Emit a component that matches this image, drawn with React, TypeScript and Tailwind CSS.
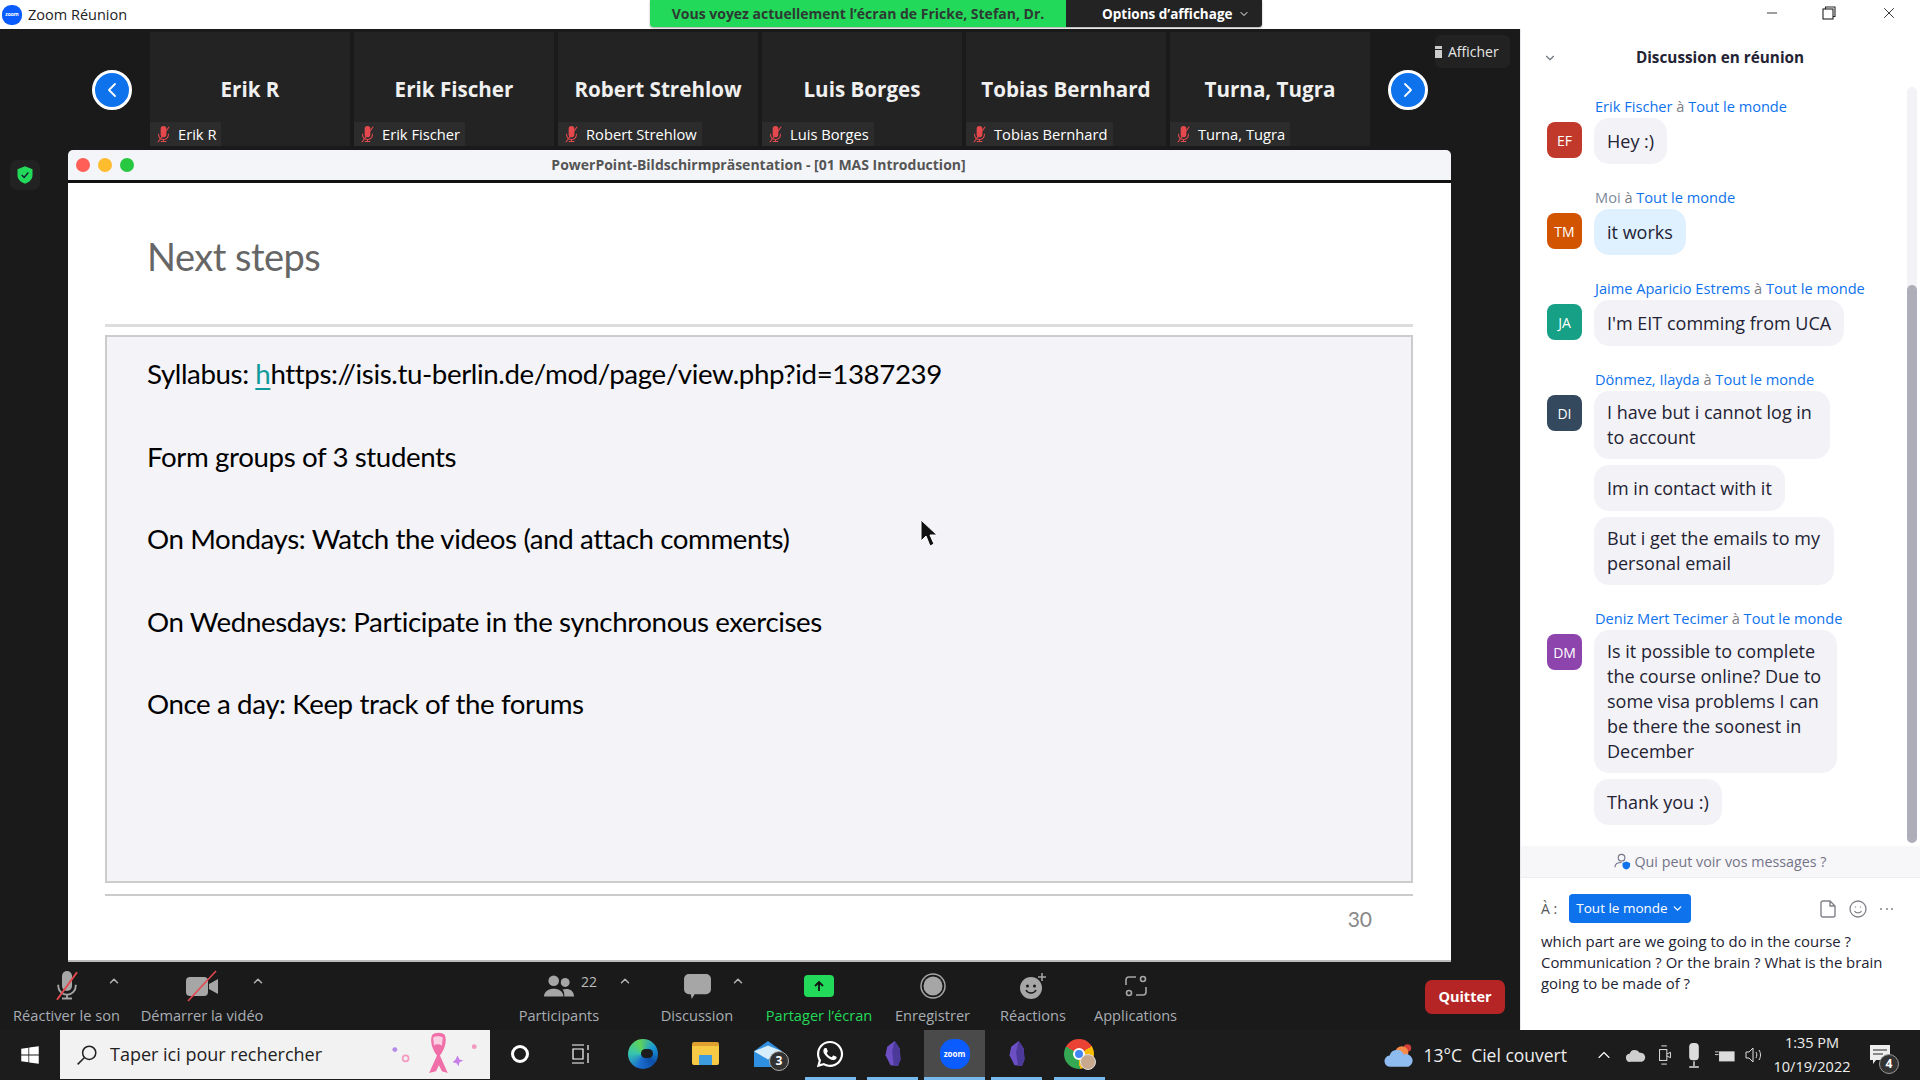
import React from "react";
import { ChevronDown, ChevronLeft, ChevronRight, ChevronUp, Minus, X } from "lucide-react";
import { FaWhatsapp, FaWindows } from "react-icons/fa";

const tiles = ["Erik R", "Erik Fischer", "Robert Strehlow", "Luis Borges", "Tobias Bernhard", "Turna, Tugra"];

const slideLines = [
  "Form groups of 3 students",
  "On Mondays: Watch the videos (and attach comments)",
  "On Wednesdays: Participate in the synchronous exercises",
  "Once a day: Keep track of the forums",
];

// wrapped bubbles hug their text in the picture, so they carry a width
const chat = [
  { from: "Erik Fischer", initials: "EF", color: "bg-[#c0392b]", bubbles: [{ text: "Hey :)" }] },
  { from: "Moi", initials: "TM", color: "bg-[#d35400]", bubbles: [{ text: "it works" }], mine: true },
  { from: "Jaime Aparicio Estrems", initials: "JA", color: "bg-[#16a085]", bubbles: [{ text: "I'm EIT comming from UCA" }] },
  {
    from: "Dönmez, Ilayda",
    initials: "DI",
    color: "bg-[#34495e]",
    bubbles: [
      { text: "I have but i cannot log in to\u00a0account", width: "w-[236px]" },
      { text: "Im in contact with it" },
      { text: "But i get the emails to my personal email", width: "w-[240px]" },
    ],
  },
  {
    from: "Deniz Mert Tecimer",
    initials: "DM",
    color: "bg-[#8e44ad]",
    bubbles: [
      { text: "Is it possible to complete the course online? Due to some visa problems I can be there the soonest in December", width: "w-[243px]" },
      { text: "Thank you :)" },
    ],
  },
];

function MutedMic({ className, tone = "#a6a6a6" }: { className: string; tone?: string }) {
  return (
    <svg viewBox="0 0 24 24" className={className} fill="none">
      <path d="M8 13V5a4 4 0 0 1 8 0v8a4 4 0 0 1-8 0z" fill={tone} transform="translate(0 -1)" />
      <path d="M5 11v1a7 7 0 0 0 14 0v-1M12 19v3M8 22h8" stroke={tone} strokeWidth="1.5" />
      <path d="M20 1 4 23" stroke="#e5484d" strokeWidth="1.6" />
    </svg>
  );
}

function ToolButton({ label, width, caret, green, children }: { label: string; width: string; caret?: string; green?: boolean; children: React.ReactNode }) {
  return (
    <div className={`relative flex flex-col items-center shrink-0 ${width}`}>
      <div className="relative h-[36px] flex items-center justify-center">{children}</div>
      <div className={`mt-[1px] text-[14.6px] leading-[20px] whitespace-nowrap ${green ? "text-[#23d959]" : "text-[#a8adb3]"}`}>{label}</div>
      {caret && <ChevronUp className={`absolute top-[6px] w-[14px] h-[14px] text-[#b5b5b5] ${caret}`} strokeWidth={2.5} />}
    </div>
  );
}

function ChatMessage({ from, initials, color, bubbles, mine }: { from: string; initials: string; color: string; bubbles: { text: string; width?: string }[]; mine?: boolean }) {
  return (
    <div className="flex gap-[12px] mb-[23px]">
      <div className={`w-[35px] h-[36px] mt-[26px] shrink-0 rounded-[8px] flex items-center justify-center text-white text-[14px] ${color}`}>{initials}</div>
      <div className="min-w-0">
        <div className="text-[14.6px] leading-[20px] mb-[2px] ml-[1px] whitespace-nowrap">
          <span className={mine ? "text-[#7d8a9a]" : "text-[#0e72ed]"}>{from}</span>
          <span className="text-[#7d7d85]"> à </span>
          <span className="text-[#0e72ed]">Tout le monde</span>
        </div>
        <div className="flex flex-col items-start gap-[6px]">
          {bubbles.map((b) => (
            <div key={b.text} className={`${b.width ?? "max-w-[254px]"} min-h-[46px] px-[13px] py-[9px] rounded-[15px] text-[18px] leading-[25px] flex items-center text-[#232333] ${mine ? "bg-[#dff0ff]" : "bg-[#f2f2f7]"}`}>
              <span>{b.text}</span>
            </div>
          ))}
        </div>
      </div>
    </div>
  );
}

function ZoomLogo({ className, text }: { className: string; text: string }) {
  return <div className={`bg-[#0b5cff] flex items-center justify-center text-white font-bold rounded-[45%] ${className} ${text}`}>zoom</div>;
}

function Obsidian() {
  return (
    <svg viewBox="0 0 24 32" className="w-[20px] h-[27px]">
      <path d="M14 1 5 8 3 18l6 12 9 1 3-8-1-13z" fill="#6c4fc4" />
      <path d="M14 1 11 14l2 16 5 1 3-8-1-13z" fill="#4c3a9a" />
    </svg>
  );
}

function TaskItem({ width, line, active, children }: { width: string; line?: boolean; active?: boolean; children: React.ReactNode }) {
  return (
    <div className={`relative flex flex-col items-center shrink-0 ${width} ${active ? "bg-[#4a4a4a]" : ""}`}>
      <div className="flex-1 flex items-center justify-center">{children}</div>
      <div className={`h-[3px] ${active ? "w-full" : "w-[51px]"} ${line ? "bg-[#76b9ed]" : "bg-transparent"}`} />
    </div>
  );
}

export default function App() {
  return (
    <div className="w-[1920px] h-[1080px] overflow-hidden flex flex-col bg-[#1a1a1a] font-['Open_Sans',sans-serif]">
      {/* title bar */}
      <div className="h-[29px] bg-white flex items-start shrink-0">
        <div className="w-[650px] h-[29px] flex items-center pl-[2px] gap-[6px]">
          <ZoomLogo className="w-[20px] h-[20px]" text="text-[5px]" />
          <span className="text-[14.5px] text-[#222]">Zoom Réunion</span>
        </div>
        <div className="flex h-[27px] rounded-b-[3px] overflow-hidden shadow-[0_1px_2px_rgba(0,0,0,0.35)]">
          <div className="w-[416px] bg-[#23d959] text-[#2c3a33] text-[14px] font-bold flex items-center justify-center whitespace-nowrap">
            Vous voyez actuellement l’écran de Fricke, Stefan, Dr.
          </div>
          <div className="w-[196px] bg-[#232323] text-white text-[13.5px] font-bold flex items-center pl-[36px] pt-[1px] gap-[6px] whitespace-nowrap">
            Options d’affichage
            <ChevronDown className="w-[12px] h-[12px]" />
          </div>
        </div>
        <div className="flex-1" />
        <div className="w-[156px] h-[26px] flex items-center text-[#222]">
          <Minus className="w-[16px] h-[16px]" strokeWidth={1.3} />
          <svg viewBox="0 0 14 14" className="ml-[42px] w-[14px] h-[14px]" fill="none" stroke="#222" strokeWidth="1.1">
            <rect x="1" y="3" width="10" height="10" />
            <path d="M3.5 3V1h9.5v9.5H11" />
          </svg>
          <X className="ml-[44px] w-[18px] h-[18px]" strokeWidth={1.2} />
        </div>
      </div>

      {/* middle */}
      <div className="flex-1 flex min-h-0">
        <div className="w-[1520px] flex flex-col shrink-0">
          {/* thumbnails strip */}
          <div className="flex h-[117px] pt-[3px] shrink-0">
            <div className="ml-[92px] mt-[38px] w-[40px] h-[40px] rounded-full bg-[#0e72ed] border-[3px] border-white flex items-center justify-center shrink-0">
              <ChevronLeft className="w-[24px] h-[24px] text-white" strokeWidth={1.8} />
            </div>
            <div className="ml-[18px] flex gap-[4px]">
              {tiles.map((name) => (
                <div key={name} className="w-[200px] h-[114px] bg-[#232323] flex flex-col">
                  <div className="flex-1 flex items-center justify-center text-[20.6px] font-bold text-[#f0f0f0] pt-[25px]">{name}</div>
                  <div className="self-start h-[24px] bg-[#2c2c2c] flex items-center pl-[5px] pr-[5px] gap-[6px] text-[14.7px] text-white">
                    <MutedMic className="w-[17px] h-[19px]" tone="#e5484d" />
                    {name}
                  </div>
                </div>
              ))}
            </div>
            <div className="ml-[18px] mt-[38px] w-[40px] h-[40px] rounded-full bg-[#0e72ed] border-[3px] border-white flex items-center justify-center shrink-0">
              <ChevronRight className="w-[24px] h-[24px] text-white" strokeWidth={1.8} />
            </div>
            <div className="ml-[7px] mt-[3px] w-[75px] h-[33px] bg-[#222] rounded-[6px] flex items-center gap-[6px] text-[14px] text-[#e6e6e6]">
              <div className="flex flex-col gap-[1px]">
                <div className="w-[7px] h-[3px] bg-[#ccc]" />
                <div className="w-[7px] h-[8px] bg-[#ccc]" />
              </div>
              Afficher
            </div>
          </div>

          {/* shared screen */}
          <div className="flex pt-[4px] pl-[10px] shrink-0">
            <div className="mt-[10px] w-[30px] h-[30px] rounded-[7px] bg-[#222] flex items-center justify-center">
              <svg viewBox="0 0 24 24" className="w-[20px] h-[20px]">
                <path d="M12 1.5 21 5v7c0 5-3.6 8.6-9 10.5C6.600 20.600 3 17 3 12V5z" fill="#23d959" />
                <path d="m8 12 3 3 5-6" stroke="#123" strokeWidth="1.8" fill="none" />
              </svg>
            </div>
            <div className="ml-[28px] w-[1383px] h-[812px] flex flex-col font-['Lato',sans-serif]">
              <div className="h-[30px] bg-[#f4f5f9] rounded-t-[5px] flex items-center pl-[8px] relative shrink-0">
                <div className="flex gap-[8px]">
                  <div className="w-[14px] h-[14px] rounded-full bg-[#ff5f57]" />
                  <div className="w-[14px] h-[14px] rounded-full bg-[#febc2e]" />
                  <div className="w-[14px] h-[14px] rounded-full bg-[#28c840]" />
                </div>
                <div className="flex-1 pr-[68px] pb-[2px] text-center text-[14px] font-bold text-[#555] font-['Open_Sans',sans-serif] whitespace-nowrap">
                  PowerPoint-Bildschirmpräsentation - [01 MAS Introduction]
                </div>
              </div>
              <div className="h-[3px] bg-[#111] shrink-0" />
              <div className="flex-1 bg-white pl-[37px] pr-[38px] flex flex-col border-b-[2px] border-[#bbb]">
                <div className="h-[144px] pl-[42px] pt-[51px] text-[38px] leading-[44px] text-[#666] tracking-[-0.5px] border-b-[3px] border-[#ddd] shrink-0">Next steps</div>
                <div className="mt-[8px] h-[548px] bg-[#f3f3f8] border-[2px] border-[#ccc] pl-[40px] pt-[15px] text-[27.7px] leading-[44px] text-[#000] shrink-0 tracking-[-0.4px]">
                  <div className="h-[82.500px]">
                    Syllabus: <span className="text-[#0e9a9a] underline decoration-2 underline-offset-4">h</span>https://isis.tu-berlin.de/mod/page/view.php?id=1387239
                  </div>
                  {slideLines.map((line) => (
                    <div key={line} className="h-[82.500px]">
                      {line}
                    </div>
                  ))}
                  <svg viewBox="0 0 18 28" className="absolute left-[920px] top-[519px] w-[18px] h-[28px]">
                    <path d="M1 1v21l5-5 4 10 4-2-4-9h7z" fill="#111" stroke="#fff" strokeWidth="1" />
                  </svg>
                </div>
                <div className="mt-[11px] border-t-[2px] border-[#ccc] flex justify-end pr-[41px] pt-[7px] text-[21px] text-[#888] shrink-0">30</div>
              </div>
            </div>
          </div>

          {/* toolbar */}
          <div className="flex-1 flex pt-[6px] pl-[12px]">
            <ToolButton label="Réactiver le son" width="w-[109px]" caret="right-[0px]">
              <MutedMic className="w-[30px] h-[34px]" />
            </ToolButton>
            <ToolButton label="Démarrer la vidéo" width="w-[124px] ml-[19px]" caret="-right-[1px]">
              <svg viewBox="0 0 34 34" className="w-[34px] h-[34px]">
                <rect x="1" y="8" width="22" height="19" rx="4" fill="#a6a6a6" />
                <path d="m24 15 9-5v15l-9-5z" fill="#a6a6a6" />
                <path d="M31 2 3 32" stroke="#e5484d" strokeWidth="1.6" />
              </svg>
            </ToolButton>
            <ToolButton label="Participants" width="w-[82px] ml-[254px]" caret="-right-[32px]">
              <svg viewBox="0 0 34 26" className="w-[30px] h-[24px]">
                <circle cx="11" cy="7" r="6" fill="#a6a6a6" />
                <circle cx="24" cy="9" r="5" fill="#a6a6a6" />
                <path d="M0 25c0-12 22-12 22 0z" fill="#a6a6a6" />
                <path d="M23 25h11c0-8-7-10-13-8 2 2 2 5 2 8z" fill="#a6a6a6" />
              </svg>
              <span className="absolute left-[37px] top-[3px] text-[14px] text-[#bbb]">22</span>
            </ToolButton>
            <ToolButton label="Discussion" width="w-[74px] ml-[60px]" caret="-right-[11px]">
              <svg viewBox="0 0 28 26" className="w-[27px] h-[25px]">
                <path d="M5 0h18a5 5 0 0 1 5 5v11a5 5 0 0 1-5 5H11l-3 5-1-5H5a5 5 0 0 1-5-5V5a5 5 0 0 1 5-5z" fill="#a6a6a6" />
              </svg>
            </ToolButton>
            <ToolButton label="Partager l’écran" width="w-[108px] ml-[31px]" green>
              <div className="w-[30px] h-[22px] rounded-[4px] bg-[#23d959] flex items-center justify-center">
                <svg viewBox="0 0 12 12" className="w-[12px] h-[12px]" fill="none" stroke="#111" strokeWidth="1.8">
                  <path d="M6 11V2M2 6l4-4 4 4" />
                </svg>
              </div>
            </ToolButton>
            <ToolButton label="Enregistrer" width="w-[75px] ml-[22px]">
              <svg viewBox="0 0 26 26" className="w-[26px] h-[26px]">
                <circle cx="13" cy="13" r="12" fill="none" stroke="#a6a6a6" strokeWidth="1.5" />
                <circle cx="13" cy="13" r="9.500" fill="#a6a6a6" />
              </svg>
            </ToolButton>
            <ToolButton label="Réactions" width="w-[66px] ml-[30px]">
              <svg viewBox="0 0 28 28" className="w-[28px] h-[28px]">
                <circle cx="12" cy="16" r="11" fill="#a6a6a6" />
                <circle cx="8.500" cy="14" r="1.500" fill="#1a1a1a" />
                <circle cx="15.500" cy="14" r="1.500" fill="#1a1a1a" />
                <path d="M7 18c2 4 8 4 10 0" stroke="#1a1a1a" strokeWidth="1.5" fill="none" />
                <path d="M23 1v8M19 5h8" stroke="#a6a6a6" strokeWidth="1.500" />
              </svg>
            </ToolButton>
            <ToolButton label="Applications" width="w-[85px] ml-[27px]">
              <svg viewBox="0 0 24 24" className="w-[24px] h-[24px]" fill="none" stroke="#a6a6a6" strokeWidth="1.6">
                <path d="M2 11V6a3 3 0 0 1 3-3h7M22 13v5a3 3 0 0 1-3 3h-7" />
                <circle cx="19" cy="5" r="2.500" />
                <circle cx="5" cy="19" r="2.500" />
              </svg>
            </ToolButton>
            <div className="ml-[247px] mt-[12px] w-[80px] h-[34px] rounded-[7px] bg-[#b52525] flex items-center justify-center text-[14.5px] font-bold text-white">Quitter</div>
          </div>
        </div>

        {/* chat panel */}
        <div className="w-[400px] bg-white flex flex-col border-l border-[#e8e8ee]">
          <div className="h-[58px] flex items-center relative shrink-0">
            <ChevronDown className="ml-[22px] w-[14px] h-[14px] text-[#6e7680]" />
            <div className="flex-1 text-center pr-[37px] pb-[2px] text-[15.3px] font-bold text-[#232333]">Discussion en réunion</div>
          </div>
          <div className="flex-1 min-h-0 flex">
            <div className="flex-1 pl-[26px] pt-[9px] min-w-0 overflow-hidden">
              {chat.map((m) => (
                <ChatMessage key={m.from} {...m} />
              ))}
            </div>
            <div className="w-[10px] mr-[3px] mb-[3px] bg-[#f3f3f7] rounded-[5px] flex flex-col justify-end">
              <div className="h-[558px] bg-[#aeaeb8] rounded-[5px]" />
            </div>
          </div>
          <div className="h-[32px] bg-[#f7f7fa] border-b border-[#eceef2] flex items-center justify-center gap-[3px] text-[14.3px] text-[#747487] shrink-0">
            <svg viewBox="0 0 18 18" className="w-[17px] h-[17px]" fill="none">
              <circle cx="8" cy="5" r="3.500" stroke="#747487" strokeWidth="1.2" />
              <path d="M1 15c0-4 4-5 7-5" stroke="#747487" strokeWidth="1.2" />
              <path d="M13 9l4 1.500v3c0 2-2 3.500-4 4-2-.5-4-2-4-4v-3z" fill="#0e72ed" />
            </svg>
            Qui peut voir vos messages ?
          </div>
          <div className="h-[152px] pt-[16px] pl-[20px] pr-[27px] shrink-0">
            <div className="flex items-center h-[29px]">
              <span className="text-[14px] text-[#555] w-[28px]">À :</span>
              <div className="w-[122px] h-[29px] rounded-[4px] bg-[#0e72ed] flex items-center justify-center gap-[3px] text-[13.5px] text-white">
                Tout le monde
                <ChevronDown className="w-[13px] h-[13px]" strokeWidth={2.4} />
              </div>
              <div className="flex-1" />
              <svg viewBox="0 0 16 18" className="w-[16px] h-[18px]" fill="none" stroke="#808088" strokeWidth="1.4">
                <path d="M3 1h7l5 5v9a2 2 0 0 1-2 2H3a2 2 0 0 1-2-2V3a2 2 0 0 1 2-2zM10 1v5h5" />
              </svg>
              <svg viewBox="0 0 18 18" className="ml-[13px] w-[18px] h-[18px]" fill="none" stroke="#808088" strokeWidth="1.3">
                <circle cx="9" cy="9" r="8" />
                <path d="M5.500 11c1.500 2.500 5.500 2.500 7 0M6.500 6.500v1M11.500 6.500v1" />
              </svg>
              <div className="ml-[13px] w-[13px] flex justify-between">
                <div className="w-[2px] h-[2px] bg-[#808088] rounded-full" />
                <div className="w-[2px] h-[2px] bg-[#808088] rounded-full" />
                <div className="w-[2px] h-[2px] bg-[#808088] rounded-full" />
              </div>
            </div>
            <div className="mt-[8px] text-[14.9px] leading-[21px] text-[#232333]">
              which part are we going to do in the course ? Communication ? Or the brain ? What is the brain going to be made of ?
            </div>
          </div>
        </div>
      </div>

      {/* windows taskbar */}
      <div className="h-[50px] shrink-0 bg-[#1c1c1c] flex items-stretch text-white">
        <div className="w-[60px] flex items-center justify-center">
          <FaWindows className="w-[20px] h-[20px]" />
        </div>
        <div className="w-[430px] h-[49px] bg-[#f2f2f2] flex items-center pl-[16px] relative text-[18px] text-[#222]">
          <svg viewBox="0 0 20 20" className="w-[22px] h-[22px] mr-[12px]" fill="none" stroke="#222" strokeWidth="1.4">
            <circle cx="12" cy="8" r="6" />
            <path d="M7.500 12.500 1.500 18.500" />
          </svg>
          Taper ici pour rechercher
          <svg viewBox="0 0 90 50" className="absolute right-[9px] top-0 w-[90px] h-[49px]">
            <circle cx="3" cy="20" r="2.500" fill="#b68ae8" />
            <circle cx="14" cy="29" r="3" fill="none" stroke="#f49ac1" strokeWidth="1.800" />
            <path d="M38 44 46 26c-6-8-7-16-5-21 3-3 10-3 13 0 2 5 1 13-5 21l8 18-6-2-3-6-3 6z" fill="#f06fa8" />
            <path d="M42 8c3-2 7-2 10 0l-1 8c-3-2-6-2-8 0z" fill="#fbd0e2" />
            <path d="M67 26l2 4 4 1-4 2-1 4-2-3-4-1 3-3z" fill="#c77ee8" />
            <circle cx="84" cy="17" r="2.500" fill="#f49ac1" />
          </svg>
        </div>
        <TaskItem width="w-[60px]">
          <div className="w-[18px] h-[18px] rounded-full border-[3px] border-white" />
        </TaskItem>
        <TaskItem width="w-[62px]">
          <svg viewBox="0 0 20 20" className="w-[20px] h-[20px]" fill="none" stroke="#fff" strokeWidth="1.200">
            <path d="M1 1h12M1 19h12M2 5h10v10H2zM17 1v5M17 9v10" />
          </svg>
        </TaskItem>
        <TaskItem width="w-[62px]">
          <div className="w-[30px] h-[30px] rounded-full bg-[conic-gradient(from_200deg,#1b6fd0,#36c4b0,#5fd35a,#1b9ad6,#0c4fa8,#1b6fd0)] flex items-center justify-center">
            <div className="w-[12px] h-[9px] rounded-full bg-[#1c1c1c] ml-[8px]" />
          </div>
        </TaskItem>
        <TaskItem width="w-[62px]">
          <div className="w-[27px] h-[23px] bg-[#f8c944] rounded-[2px] flex items-end justify-center border-t-[4px] border-[#e0a030]">
            <div className="w-[13px] h-[10px] bg-[#3d9be0]" />
          </div>
        </TaskItem>
        <TaskItem width="w-[63px]">
          <svg viewBox="0 0 32 30" className="w-[30px] h-[28px]">
            <path d="M1 12 16 1l15 11v17H1z" fill="#2f8fe0" />
            <path d="M1 12l15 9 15-9-15-6z" fill="#d6edfb" />
          </svg>
          <div className="absolute left-[33px] top-[21px] w-[20px] h-[20px] rounded-full bg-[#333] border border-[#aaa] flex items-center justify-center text-[12px] font-bold leading-none">3</div>
        </TaskItem>
        <TaskItem width="w-[62px]" line>
          <FaWhatsapp className="w-[30px] h-[30px] text-white" />
        </TaskItem>
        <TaskItem width="w-[63px]" line>
          <Obsidian />
        </TaskItem>
        <TaskItem width="w-[61px]" line active>
          <ZoomLogo className="w-[30px] h-[30px]" text="text-[8px]" />
        </TaskItem>
        <TaskItem width="w-[63px]" line>
          <Obsidian />
        </TaskItem>
        <TaskItem width="w-[62px]" line>
          <div className="w-[30px] h-[30px] rounded-full bg-[conic-gradient(from_-60deg,#ea4335_0_33%,#fbbc05_33%_66%,#34a853_66%_100%)] flex items-center justify-center">
            <div className="w-[12px] h-[12px] rounded-full bg-[#4285f4] border-[2px] border-white" />
          </div>
          <div className="absolute left-[32px] top-[24px] w-[16px] h-[16px] rounded-full bg-[#c9a98e] border border-[#ddd]" />
        </TaskItem>
        <div className="w-[457px] flex items-center justify-end gap-[10px] text-[17.500px] text-[#eee]">
          <svg viewBox="0 0 32 26" className="w-[30px] h-[25px]">
            <circle cx="25" cy="5" r="4" fill="#d43f3a" />
            <circle cx="19" cy="10" r="7" fill="#f58a4b" />
            <path d="M7 25a6 6 0 0 1-1-12 8 8 0 0 1 15-1 6.500 6.500 0 0 1 5 13z" fill="#8fbcf0" />
          </svg>
          <span className="whitespace-pre">13°C  Ciel couvert</span>
        </div>
        <div className="flex-1 flex items-center pl-[27px]">
          <ChevronUp className="w-[20px] h-[20px]" strokeWidth={1.3} />
          <svg viewBox="0 0 22 14" className="ml-[12px] w-[20px] h-[13px]">
            <path d="M5 14a4.500 4.500 0 0 1-1-9 6 6 0 0 1 11-1 5 5 0 0 1 2 10z" fill="#cfcfcf" />
          </svg>
          <svg viewBox="0 0 14 22" className="ml-[12px] w-[14px] h-[20px]" fill="none" stroke="#ddd" strokeWidth="1.100">
            <rect x="1" y="5" width="8" height="12" />
            <path d="m9 10 4-2v6l-4-2M3 1h6M3 21h6" />
          </svg>
          <svg viewBox="0 0 14 26" className="ml-[15px] w-[14px] h-[25px]">
            <rect x="2" y="0" width="10" height="18" rx="4" fill="#ddd" />
            <path d="M7 19v5M2 25h10" stroke="#ddd" strokeWidth="1.500" />
          </svg>
          <svg viewBox="0 0 22 14" className="ml-[14px] w-[20px] h-[13px]" fill="none" stroke="#ddd">
            <rect x="5" y="3" width="16" height="10" fill="#ddd" />
            <path d="M0 3h4M0 6h4" />
          </svg>
          <svg viewBox="0 0 20 16" className="ml-[10px] w-[20px] h-[16px]" fill="none" stroke="#ddd">
            <path d="M1 5h3l4-4v14l-4-4H1zM11 5c1 2 1 4 0 6M14 3c2 3 2 7 0 10" />
          </svg>
          <div className="ml-[8px] w-[78px] flex flex-col items-center text-[14.500px] leading-[24px] text-[#eee] whitespace-nowrap">
            <span>1:35 PM</span>
            <span>10/19/2022</span>
          </div>
          <div className="ml-[19px] relative">
            <svg viewBox="0 0 20 20" className="w-[20px] h-[20px]">
              <path d="M0 0h20v15H6l-3 4v-4H0z" fill="#eee" />
              <path d="M3 5h14M3 9h10" stroke="#222" />
            </svg>
            <div className="absolute left-[9px] top-[9px] w-[20px] h-[20px] rounded-full bg-[#333] border border-[#999] flex items-center justify-center text-[12px] font-bold leading-none">4</div>
          </div>
        </div>
      </div>
    </div>
  );
}
